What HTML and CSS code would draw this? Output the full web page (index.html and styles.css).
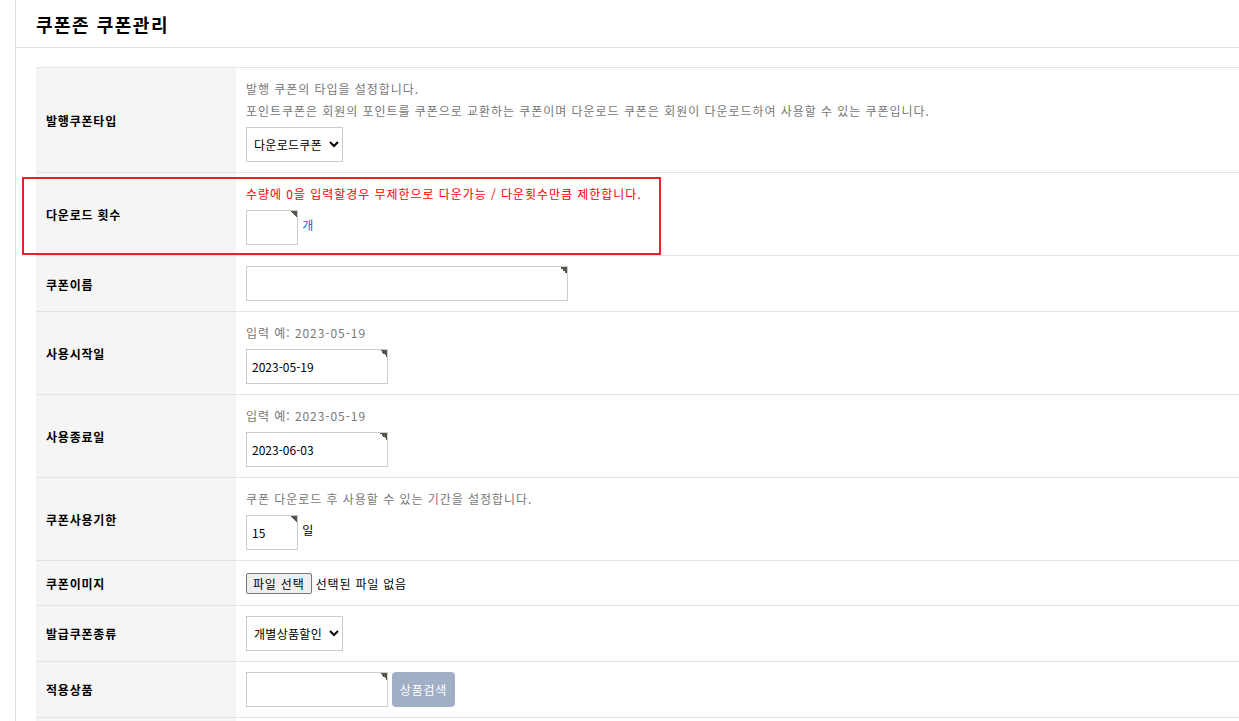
FILE: index.html
```html
<!DOCTYPE html>
<html lang="ko">

<head>
    <meta charset="UTF-8">
    <title>쿠폰존 쿠폰관리</title>
    <link rel="stylesheet" href="styles.css">
</head>

<body>

    <div class="wrap">
        <div class="page-head">
            <h1>쿠폰존 쿠폰관리</h1>
        </div>

        <div class="content">
            <table class="frm">
                <tr>
                    <th>발행쿠폰타입</th>
                    <td>
                        <p class="help">발행 쿠폰의 타입을 설정합니다.</p>
                        <p class="help">포인트쿠폰은 회원의 포인트를 쿠폰으로 교환하는 쿠폰이며 다운로드 쿠폰은 회원이 다운로드하여 사용할 수 있는 쿠폰입니다.</p>
                        <select class="sel">
                            <option>다운로드쿠폰</option>
                        </select>
                    </td>
                </tr>
                <tr>
                    <th>다운로드 횟수</th>
                    <td>
                        <p class="help warn">수량에 0을 입력할경우 무제한으로 다운가능 / 다운횟수만큼 제한합니다.</p>
                        <input type="text" class="inp req small"> <span class="unit blue">개</span>
                    </td>
                </tr>
                <tr>
                    <th>쿠폰이름</th>
                    <td><input type="text" class="inp req wide"></td>
                </tr>
                <tr>
                    <th>사용시작일</th>
                    <td>
                        <p class="help">입력 예: 2023-05-19</p>
                        <input type="text" class="inp req date" value="2023-05-19">
                    </td>
                </tr>
                <tr>
                    <th>사용종료일</th>
                    <td>
                        <p class="help">입력 예: 2023-05-19</p>
                        <input type="text" class="inp req date" value="2023-06-03">
                    </td>
                </tr>
                <tr>
                    <th>쿠폰사용기한</th>
                    <td>
                        <p class="help">쿠폰 다운로드 후 사용할 수 있는 기간을 설정합니다.</p>
                        <input type="text" class="inp req small" value="15"> <span class="unit">일</span>
                    </td>
                </tr>
                <tr>
                    <th>쿠폰이미지</th>
                    <td class="file-cell">
                        <button type="button" class="file-btn">파일 선택</button>
                        <span class="file-name">선택된 파일 없음</span>
                    </td>
                </tr>
                <tr>
                    <th>발급쿠폰종류</th>
                    <td>
                        <select class="sel">
                            <option>개별상품할인</option>
                        </select>
                    </td>
                </tr>
                <tr>
                    <th>적용상품</th>
                    <td>
                        <div class="row-inline">
                            <input type="text" class="inp req date">
                            <button type="button" class="btn-search">상품검색</button>
                        </div>
                    </td>
                </tr>
                <tr>
                    <th>&nbsp;</th>
                    <td>&nbsp;</td>
                </tr>
            </table>

            <div class="mark"></div>
        </div>
    </div>

</body>

</html>
```

FILE: styles.css
```css
body {
    margin: 0;
    font-family: "Noto Sans CJK KR", "Noto Sans", sans-serif;
    font-size: 12px;
    letter-spacing: 0.8px;
    color: #000;
    background: #fff;
}

.wrap {
    margin-left: 15px;
    border-left: 1px solid #ddd;
    min-height: 721px;
}

.page-head {
    height: 47px;
    border-bottom: 1px solid #e0e0e0;
    padding-left: 20px;
    display: flex;
    align-items: center;
}

.page-head h1 {
    margin: 0;
    font-size: 18px;
    font-weight: bold;
    letter-spacing: 1.5px;
    line-height: 1;
}

.content {
    position: relative;
    padding: 19px 0 0 20px;
}

.frm {
    width: 100%;
    border-collapse: collapse;
    border-top: 1px solid #e3e3e3;
}

.frm tr {
    border-bottom: 1px solid #e3e3e3;
}

.frm th {
    width: 190px;
    padding: 1px 0 0 10px;
    background: #f5f5f5;
    text-align: left;
    font-weight: bold;
    vertical-align: middle;
}

.frm td {
    padding: 10px;
    vertical-align: top;
    line-height: 22px;
}

.help {
    margin: 0;
    color: #777;
    line-height: 22px;
    letter-spacing: 0.95px;
}

.help.warn {
    color: #f00;
}

.sel {
    height: 35px;
    padding: 0 3px;
    border: 1px solid #ccc;
    background: #fff;
    font-family: inherit;
    font-size: 12px;
    letter-spacing: 0.3px;
    color: #000;
    display: block;
}

.frm p + .sel {
    margin-top: 5px;
}

.inp {
    box-sizing: border-box;
    height: 35px;
    border: 1px solid #ccc;
    padding: 0 5px;
    font-family: inherit;
    font-size: 12px;
    color: #000;
    vertical-align: middle;
}

.frm p + .inp {
    margin-top: 5px;
}

.inp.req {
    background: linear-gradient(to bottom left, #55554c 50%, transparent 50%) no-repeat top right / 7px 7px, #fff;
}

.small {
    width: 52px;
}

.wide {
    width: 322px;
}

.date {
    width: 142px;
}

.unit {
    vertical-align: middle;
}

.blue {
    color: #1f5fbf;
}

.file-cell {
    line-height: 24px;
}

.file-btn {
    height: 21px;
    padding: 0 6px;
    border: 1px solid #767676;
    border-radius: 2px;
    background: #efefef;
    font-family: inherit;
    font-size: 12px;
    letter-spacing: 0.8px;
    color: #000;
    vertical-align: middle;
}

.file-name {
    vertical-align: middle;
}

.row-inline {
    display: flex;
    gap: 4px;
}

.btn-search {
    height: 35px;
    width: 63px;
    border: none;
    border-radius: 4px;
    background: #a0aec6;
    color: #fff;
    font-family: inherit;
    font-size: 12px;
    letter-spacing: 0.8px;
}

.mark {
    position: absolute;
    left: 6px;
    top: 129px;
    width: 639px;
    height: 78px;
    box-sizing: border-box;
    border: 2px solid #e8202a;
}
```
